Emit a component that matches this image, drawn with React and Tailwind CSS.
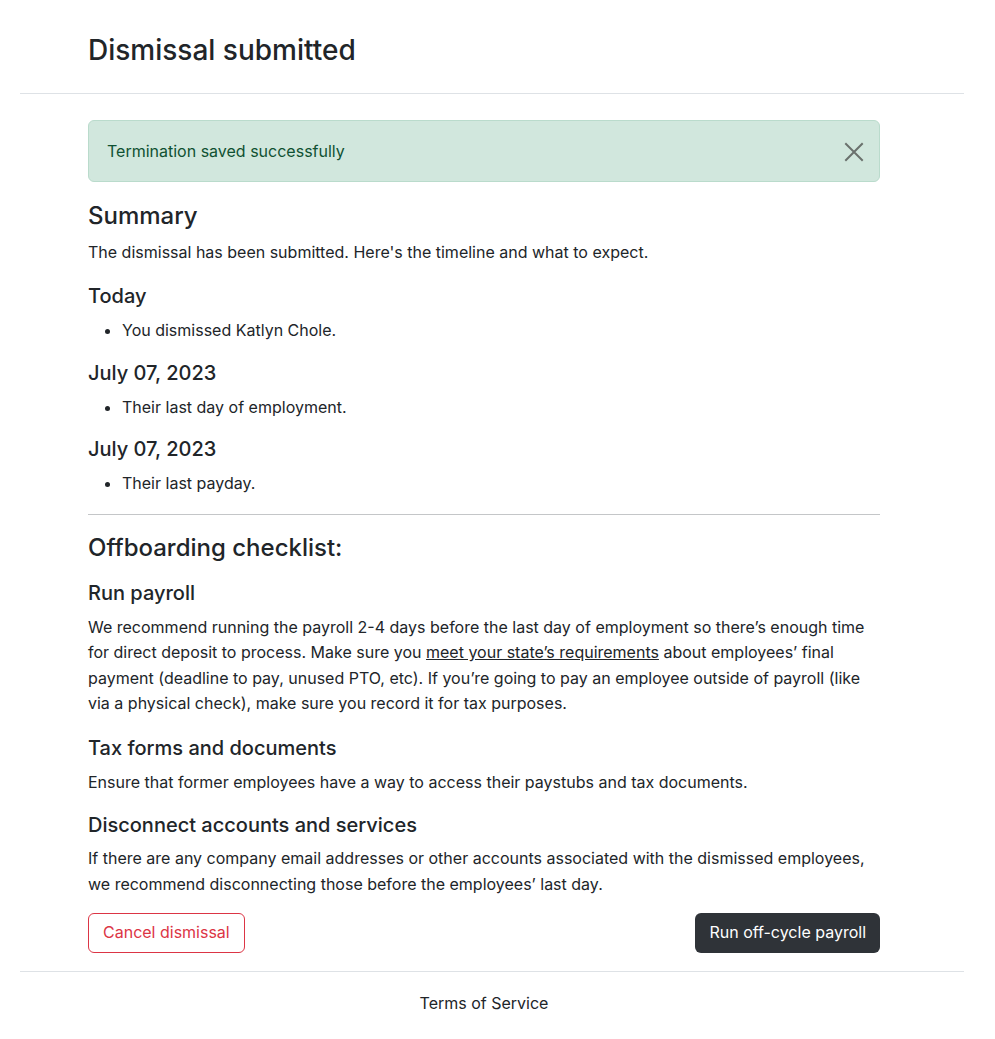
import React, { useState } from "react";

export default function App() {
  const [showAlert, setShowAlert] = useState(true);

  const timeline = [
    { title: "Today", item: "You dismissed Katlyn Chole." },
    { title: "July 07, 2023", item: "Their last day of employment." },
    { title: "July 07, 2023", item: "Their last payday." },
  ];

  return (
    <div
      className="min-h-screen bg-white pl-[20px] pr-[31px] text-[#212529] text-[16px] leading-[25.5px]"
      style={{ fontFamily: "Inter, 'Liberation Sans', sans-serif" }}
    >
      {/* Header */}
      <div className="border-b border-[#dee2e6] pt-[33px] pb-[26px]">
        <h3 className="ml-[68px] text-[28px] leading-[34px] font-medium">
          Dismissal submitted
        </h3>
      </div>

      <div className="ml-[68px] w-[792px] pt-[26px]">
        {/* Alert */}
        {showAlert && (
          <div className="flex items-center justify-between rounded-[6px] border border-[#badbcc] bg-[#d1e7dd] pt-[18px] pb-[16px] pl-[18px] pr-[13px] text-[#0f5132]">
            <span>Termination saved successfully</span>
            <button onClick={() => setShowAlert(false)} className="p-[2px]">
              <svg width="20" height="20" viewBox="0 0 20 20">
                <path
                  d="M2 2L18 18M18 2L2 18"
                  stroke="#6a716d"
                  strokeWidth="2"
                  strokeLinecap="square"
                />
              </svg>
            </button>
          </div>
        )}

        {/* Summary */}
        <h4 className="mt-[19px] text-[24px] leading-[29px] font-medium">Summary</h4>
        <p className="mt-[10px]">
          The dismissal has been submitted. Here's the timeline and what to expect.
        </p>

        {timeline.map((t, i) => (
          <div key={i} className={i === 0 ? "mt-[19px]" : "mt-[17px]"}>
            <h5 className="text-[20px] leading-[24px] font-medium">{t.title}</h5>
            <ul className="mt-[10px] list-disc pl-[34px]">
              <li>{t.item}</li>
            </ul>
          </div>
        ))}

        <hr className="mt-[17px] border-t border-[#c4c6c8]" />

        {/* Checklist */}
        <h4 className="mt-[18px] text-[24px] leading-[29px] font-medium">
          Offboarding checklist:
        </h4>

        <h5 className="mt-[19px] text-[20px] leading-[24px] font-medium">Run payroll</h5>
        <p className="mt-[10px]">
          We recommend running the payroll 2-4 days before the last day of employment so
          there’s enough time for direct deposit to process. Make sure you{" "}
          <a href="#" className="underline">
            meet your state’s requirements
          </a>{" "}
          about employees’ final payment (deadline to pay, unused PTO, etc). If you’re going
          to pay an employee outside of payroll (like via a physical check), make sure you
          record it for tax purposes.
        </p>

        <h5 className="mt-[19px] text-[20px] leading-[24px] font-medium">
          Tax forms and documents
        </h5>
        <p className="mt-[10px]">
          Ensure that former employees have a way to access their paystubs and tax documents.
        </p>

        <h5 className="mt-[18px] text-[20px] leading-[24px] font-medium">
          Disconnect accounts and services
        </h5>
        <p className="mt-[9px]">
          If there are any company email addresses or other accounts associated with the
          dismissed employees, we recommend disconnecting those before the employees’ last
          day.
        </p>

        {/* Actions */}
        <div className="mt-[16px] flex items-center justify-between">
          <button className="h-[40px] rounded-[6px] border border-[#dc3545] px-[14px] text-[#dc3545]">
            Cancel dismissal
          </button>
          <button className="h-[40px] rounded-[6px] bg-[#2f3338] px-[14px] text-white">
            Run off-cycle payroll
          </button>
        </div>
      </div>

      {/* Footer */}
      <div className="mt-[18px] border-t border-[#dee2e6] pt-[19px] pb-[24px]">
        <div className="ml-[68px] w-[792px] text-center">Terms of Service</div>
      </div>
    </div>
  );
}
